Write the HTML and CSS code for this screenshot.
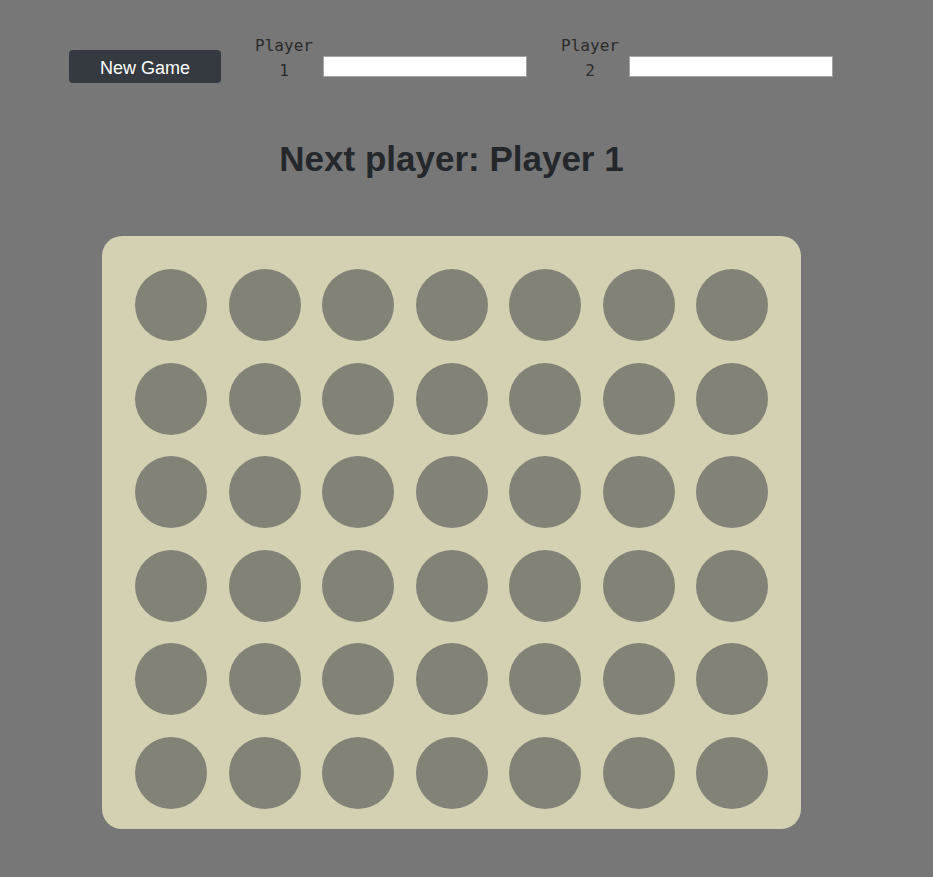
FILE: index.html
```html
<!DOCTYPE html>
<html lang="en">
<head>
<meta charset="utf-8">
<title>Connect Four</title>
<link rel="stylesheet" href="styles.css">
</head>
<body>
<div class="header">
  <button class="new-game">New Game</button>
  <label class="player-label" for="p1">Player 1</label>
  <input class="player-input" id="p1" type="text">
  <label class="player-label" for="p2">Player 2</label>
  <input class="player-input" id="p2" type="text">
</div>
<div class="main">
  <h1 class="status">Next player: Player 1</h1>
  <div class="board">
    <div class="cell"></div><div class="cell"></div><div class="cell"></div><div class="cell"></div><div class="cell"></div><div class="cell"></div><div class="cell"></div>
    <div class="cell"></div><div class="cell"></div><div class="cell"></div><div class="cell"></div><div class="cell"></div><div class="cell"></div><div class="cell"></div>
    <div class="cell"></div><div class="cell"></div><div class="cell"></div><div class="cell"></div><div class="cell"></div><div class="cell"></div><div class="cell"></div>
    <div class="cell"></div><div class="cell"></div><div class="cell"></div><div class="cell"></div><div class="cell"></div><div class="cell"></div><div class="cell"></div>
    <div class="cell"></div><div class="cell"></div><div class="cell"></div><div class="cell"></div><div class="cell"></div><div class="cell"></div><div class="cell"></div>
    <div class="cell"></div><div class="cell"></div><div class="cell"></div><div class="cell"></div><div class="cell"></div><div class="cell"></div><div class="cell"></div>
  </div>
</div>
</body>
</html>
```
FILE: styles.css
```css
html, body {
  background: #777777;
}
body {
  margin: 8px;
  font-family: "Liberation Sans", Arial, sans-serif;
}
.header {
  display: flex;
  align-items: flex-end;
  padding: 25px 0 0 61px;
}
.new-game {
  width: 152px;
  height: 33px;
  margin: 0 34px 0 0;
  padding: 3px 0 0 0;
  border: none;
  border-radius: 4px;
  background: #343a40;
  color: #ffffff;
  font-family: "Liberation Sans", Arial, sans-serif;
  font-size: 18px;
}
.player-label {
  width: 58px;
  text-align: center;
  font-family: "DejaVu Sans Mono", monospace;
  font-size: 16px;
  line-height: 25px;
  color: #2b2b2b;
  margin-right: 10px;
}
.player-input {
  box-sizing: border-box;
  width: 204px;
  height: 21px;
  margin: 0 34px 6px 0;
  padding: 0 2px;
  border: 1px solid #a3a3a3;
  background: #ffffff;
}
.main {
  width: 699px;
  margin-left: 94px;
}
.status {
  margin: 56px 0 0 0;
  text-align: center;
  font-size: 35px;
  font-weight: bold;
  color: #24272b;
}
.board {
  margin-top: 57px;
  box-sizing: border-box;
  width: 699px;
  height: 593px;
  padding: 33px 33px 20px 33px;
  border-radius: 20px;
  background: #d4d0b2;
  display: grid;
  grid-template-columns: repeat(7, 72px);
  grid-template-rows: repeat(6, 72px);
  column-gap: 21.5px;
  row-gap: 21.5px;
}
.cell {
  width: 72px;
  height: 72px;
  border-radius: 50%;
  background: #838276;
}
```
